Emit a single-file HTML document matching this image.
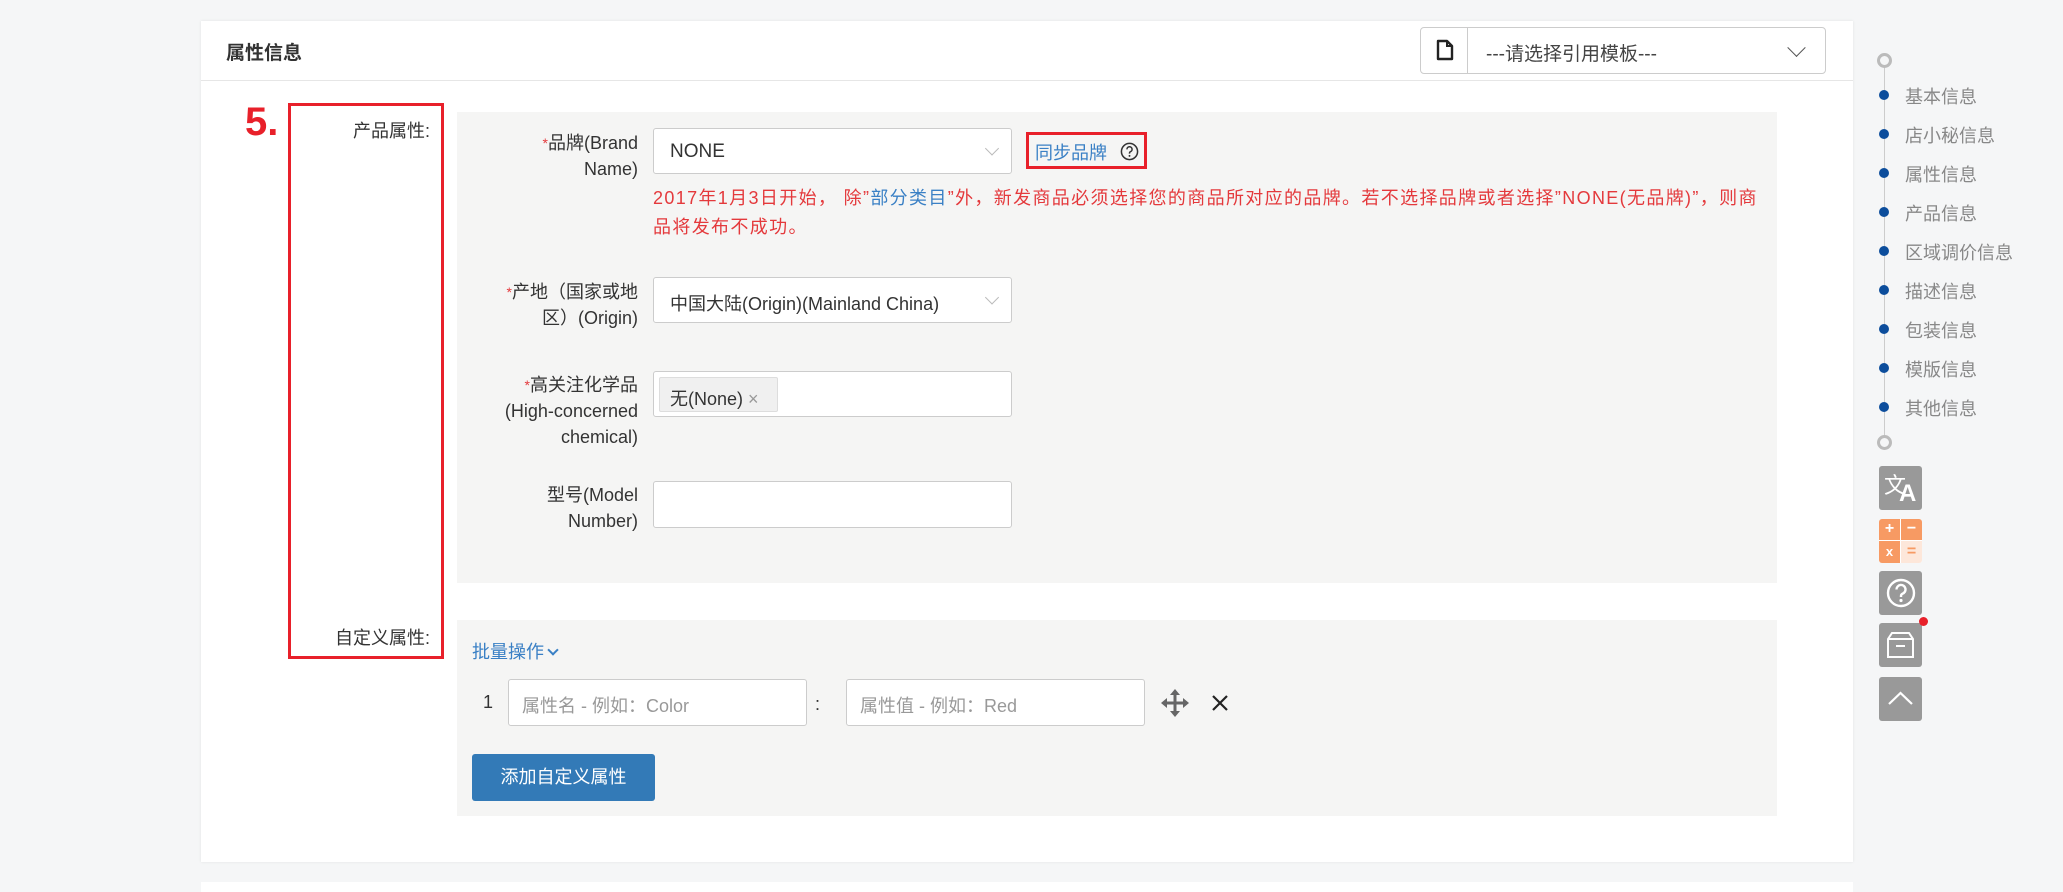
<!DOCTYPE html>
<html><head><meta charset="utf-8"><style>
*{box-sizing:border-box;margin:0;padding:0}
body{width:2063px;height:887px;background:#f5f6f7;font-family:"Liberation Sans","Noto Sans CJK SC",sans-serif;position:relative;overflow:hidden;color:#333}
.a{position:absolute}
.card{left:201px;top:21px;width:1652px;height:841px;background:#fff;box-shadow:0 0 3px rgba(0,0,0,.08)}
.inp{position:absolute;background:#fff;border:1px solid #ccc;border-radius:3px;font-size:18px;color:#333}
.lbl{position:absolute;text-align:right;font-size:18px;line-height:26px;color:#333;width:190px}
.req{color:#e4393c;font-size:14px;vertical-align:top}
.chev{position:absolute;right:14px;top:50%;width:10px;height:10px;border-right:1px solid #bbb;border-bottom:1px solid #bbb;transform:translateY(-75%) rotate(45deg)}
.nav{position:absolute;left:1905px;font-size:18px;color:#888}
.dot{position:absolute;left:1879px;width:10px;height:10px;border-radius:50%;background:#0c4d9c}
.ib{position:absolute;left:1879px;width:43px;height:44px;border-radius:3px;background:#999}
</style></head><body>
<div class="a card"></div>
<div class="a" style="left:201px;top:80px;width:1652px;height:1px;background:#e6e6e6"></div>
<div class="a" style="left:226px;top:38px;font-size:19px;font-weight:bold;color:#333">属性信息</div>
<div class="inp" style="left:1420px;top:27px;width:406px;height:47px;border-radius:4px">
 <div class="a" style="left:0;top:0;width:47px;height:45px;border-right:1px solid #ccc"></div>
 <svg class="a" style="left:15px;top:11px" width="18" height="22" viewBox="0 0 18 22"><path d="M2 2h9l5 5v13H2z" fill="none" stroke="#222" stroke-width="2.4" stroke-linejoin="round"/><path d="M11 2v5h5" fill="none" stroke="#222" stroke-width="2"/></svg>
 <div class="a" style="left:65px;top:11px;font-size:19px;color:#444">---请选择引用模板---</div>
 <div class="chev" style="right:22px;width:13px;height:13px;border-color:#555"></div>
</div>
<div class="a" style="left:288px;top:103px;width:156px;height:556px;border:3px solid #e8202a"></div>
<div class="a" style="left:245px;top:100px;font-size:40px;font-weight:bold;color:#e8202a">5.</div>
<div class="a" style="left:300px;top:117px;width:130px;text-align:right;font-size:18px">产品属性:</div>
<div class="a" style="left:300px;top:624px;width:130px;text-align:right;font-size:18px">自定义属性:</div>
<div class="a" style="left:457px;top:112px;width:1320px;height:471px;background:#f5f5f4"></div>
<div class="a" style="left:457px;top:620px;width:1320px;height:196px;background:#f5f5f4"></div>
<div class="lbl" style="left:448px;top:130px"><span class="req">*</span>品牌(Brand<br>Name)</div>
<div class="inp" style="left:653px;top:128px;width:359px;height:46px"><div class="a" style="left:16px;top:12px;font-size:19px">NONE</div><div class="chev"></div></div>
<div class="a" style="left:1026px;top:132px;width:121px;height:37px;border:3px solid #e8202a"></div>
<div class="a" style="left:1035px;top:139px;font-size:18px;color:#3a80c5">同步品牌</div>
<svg class="a" style="left:1120px;top:142px" width="19" height="19" viewBox="0 0 20 20"><circle cx="10" cy="10" r="8.5" fill="none" stroke="#333" stroke-width="1.6"/><path d="M7.3 7.8a2.7 2.7 0 1 1 3.5 2.5c-.6.3-.8.7-.8 1.4v.6" fill="none" stroke="#333" stroke-width="1.6"/><circle cx="10" cy="14.6" r="1" fill="#333"/></svg>
<div class="a" style="left:653px;top:184px;white-space:nowrap;letter-spacing:1.35px;font-size:18px;line-height:29px;color:#e4393c">2017年1月3日开始， 除”<span style="color:#3a80c5">部分类目</span>”外，新发商品必须选择您的商品所对应的品牌。若不选择品牌或者选择”NONE(无品牌)”，则商<br>品将发布不成功。</div>
<div class="lbl" style="left:448px;top:279px"><span class="req">*</span>产地（国家或地<br>区）(Origin)</div>
<div class="inp" style="left:653px;top:277px;width:359px;height:46px"><div class="a" style="left:16px;top:12px;font-size:18px">中国大陆(Origin)(Mainland China)</div><div class="chev"></div></div>
<div class="lbl" style="left:448px;top:372px"><span class="req">*</span>高关注化学品<br>(High-concerned<br>chemical)</div>
<div class="inp" style="left:653px;top:371px;width:359px;height:46px"><div class="a" style="left:5px;top:5px;width:119px;height:35px;background:#f0f0f0;border:1px solid #ddd;border-radius:2px;font-size:18px;padding:7px 0 0 10px">无(None) <span style="color:#999">×</span></div></div>
<div class="lbl" style="left:448px;top:482px">型号(Model<br>Number)</div>
<div class="inp" style="left:653px;top:481px;width:359px;height:47px"></div>
<div class="a" style="left:472px;top:638px;font-size:18px;color:#3a80c5">批量操作 <span style="display:inline-block;width:8px;height:8px;border-right:2px solid #3a80c5;border-bottom:2px solid #3a80c5;transform:translateY(-4px) rotate(45deg)"></span></div>
<div class="a" style="left:483px;top:692px;font-size:18px">1</div>
<div class="inp" style="left:508px;top:679px;width:299px;height:47px"><div class="a" style="left:13px;top:12px;color:#999">属性名 - 例如：Color</div></div>
<div class="a" style="left:815px;top:694px;font-size:18px">:</div>
<div class="inp" style="left:846px;top:679px;width:299px;height:47px"><div class="a" style="left:13px;top:12px;color:#999">属性值 - 例如：Red</div></div>
<svg class="a" style="left:1160px;top:688px" width="30" height="30" viewBox="0 0 30 30" fill="#666"><path d="M15 1l5 6h-3.5v6.5H23V10l6 5-6 5v-3.5h-6.5V23H20l-5 6-5-6h3.5v-6.5H7V20l-6-5 6-5v3.5h6.5V7H10z"/></svg>
<svg class="a" style="left:1211px;top:694px" width="18" height="18" viewBox="0 0 18 18"><path d="M2 2L16 16M16 2L2 16" stroke="#222" stroke-width="2.2"/></svg>
<div class="a" style="left:472px;top:754px;width:183px;height:47px;background:#337ab7;border-radius:3px;color:#fff;font-size:18px;text-align:center;line-height:47px">添加自定义属性</div>
<div class="a" style="left:201px;top:882px;width:1652px;height:10px;background:#fff"></div>
<div class="a" style="left:1884px;top:66px;width:1px;height:376px;background:#ccc"></div>
<div class="a" style="left:1877px;top:53px;width:15px;height:15px;border:3px solid #bbb;border-radius:50%;background:#f5f6f7"></div>
<div class="a" style="left:1877px;top:435px;width:15px;height:15px;border:3px solid #bbb;border-radius:50%;background:#f5f6f7"></div>
<div class="dot" style="top:90px"></div><div class="nav" style="top:83px">基本信息</div>
<div class="dot" style="top:129px"></div><div class="nav" style="top:122px">店小秘信息</div>
<div class="dot" style="top:168px"></div><div class="nav" style="top:161px">属性信息</div>
<div class="dot" style="top:207px"></div><div class="nav" style="top:200px">产品信息</div>
<div class="dot" style="top:246px"></div><div class="nav" style="top:239px">区域调价信息</div>
<div class="dot" style="top:285px"></div><div class="nav" style="top:278px">描述信息</div>
<div class="dot" style="top:324px"></div><div class="nav" style="top:317px">包装信息</div>
<div class="dot" style="top:363px"></div><div class="nav" style="top:356px">模版信息</div>
<div class="dot" style="top:402px"></div><div class="nav" style="top:395px">其他信息</div>
<div class="ib" style="top:466px"><div class="a" style="left:5px;top:2px;color:#fff;font-size:22px">文</div><div class="a" style="left:20px;top:14px;color:#fff;font-size:24px;font-weight:bold">A</div></div>
<div class="a" style="left:1879px;top:519px;width:43px;height:44px;border-radius:3px;overflow:hidden;background:#fff">
 <div class="a" style="left:0;top:0;width:21px;height:21px;background:#f79a63;color:#fff;font-weight:bold;text-align:center;line-height:20px">+</div>
 <div class="a" style="left:22px;top:0;width:21px;height:21px;background:#f79a63;color:#fff;font-weight:bold;text-align:center;line-height:20px">−</div>
 <div class="a" style="left:0;top:22px;width:21px;height:22px;background:#f79a63;color:#fff;font-size:13px;font-weight:bold;text-align:center;line-height:22px">x</div>
 <div class="a" style="left:22px;top:22px;width:21px;height:22px;background:#fde7da;color:#f79a63;font-weight:bold;text-align:center;line-height:22px">=</div>
</div>
<div class="ib" style="top:571px"><svg class="a" style="left:7px;top:7px" width="30" height="30" viewBox="0 0 30 30"><circle cx="15" cy="15" r="13" fill="none" stroke="#fff" stroke-width="2.4"/><path d="M10.5 11.5a4.5 4.5 0 1 1 6 4.2c-1 .5-1.5 1.2-1.5 2.3v1" fill="none" stroke="#fff" stroke-width="2.4"/><circle cx="15" cy="22.5" r="1.6" fill="#fff"/></svg></div>
<div class="ib" style="top:623px"><svg class="a" style="left:7px;top:8px" width="29" height="28" viewBox="0 0 29 28"><path d="M2 8l4-6h17l4 6v18H2z M2 8h25 M10 15h9" fill="none" stroke="#fff" stroke-width="2"/></svg></div>
<div class="a" style="left:1919px;top:617px;width:9px;height:9px;border-radius:50%;background:#e8202a"></div>
<div class="ib" style="top:677px"><svg class="a" style="left:8px;top:13px" width="27" height="16" viewBox="0 0 27 16"><path d="M2 14L13.5 3 25 14" fill="none" stroke="#fff" stroke-width="2.2"/></svg></div>
</body></html>
